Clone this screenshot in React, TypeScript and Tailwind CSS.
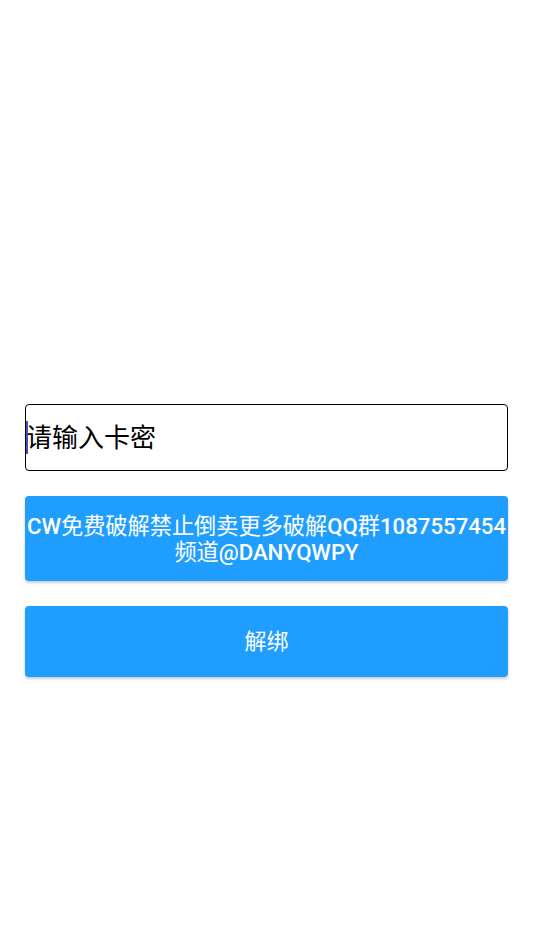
export default function App() {
  return (
    <div
      className="w-[533px] h-[945px] bg-white flex flex-col pt-[404px] px-[25px]"
      style={{ fontFamily: 'Roboto, "Noto Sans CJK SC", sans-serif' }}
    >
      <div className="h-[67px] border border-black rounded-[4px] flex items-center relative">
        <div className="absolute left-0 top-[16px] w-[2px] h-[33px] bg-[#3f51b5]" />
        <span className="text-[26px] text-black leading-none">请输入卡密</span>
      </div>
      <div className="mt-[25px] h-[85px] rounded-[4px] bg-[#1f9eff] shadow-[0_2px_3px_rgba(0,0,0,0.2)] flex flex-col items-center justify-center text-white text-[22.2px] leading-[26px] text-center whitespace-nowrap">
        <div>
          <span className="font-medium">CW</span>免费破解禁止倒卖更多破解<span className="font-medium">QQ</span>群<span className="font-medium">1087557454</span>
        </div>
        <div>
          频道<span className="font-medium">@DANYQWPY</span>
        </div>
      </div>
      <div className="mt-[25px] h-[71px] rounded-[4px] bg-[#1f9eff] shadow-[0_2px_3px_rgba(0,0,0,0.2)] flex items-center justify-center text-white text-[22px]">
        解绑
      </div>
    </div>
  );
}
